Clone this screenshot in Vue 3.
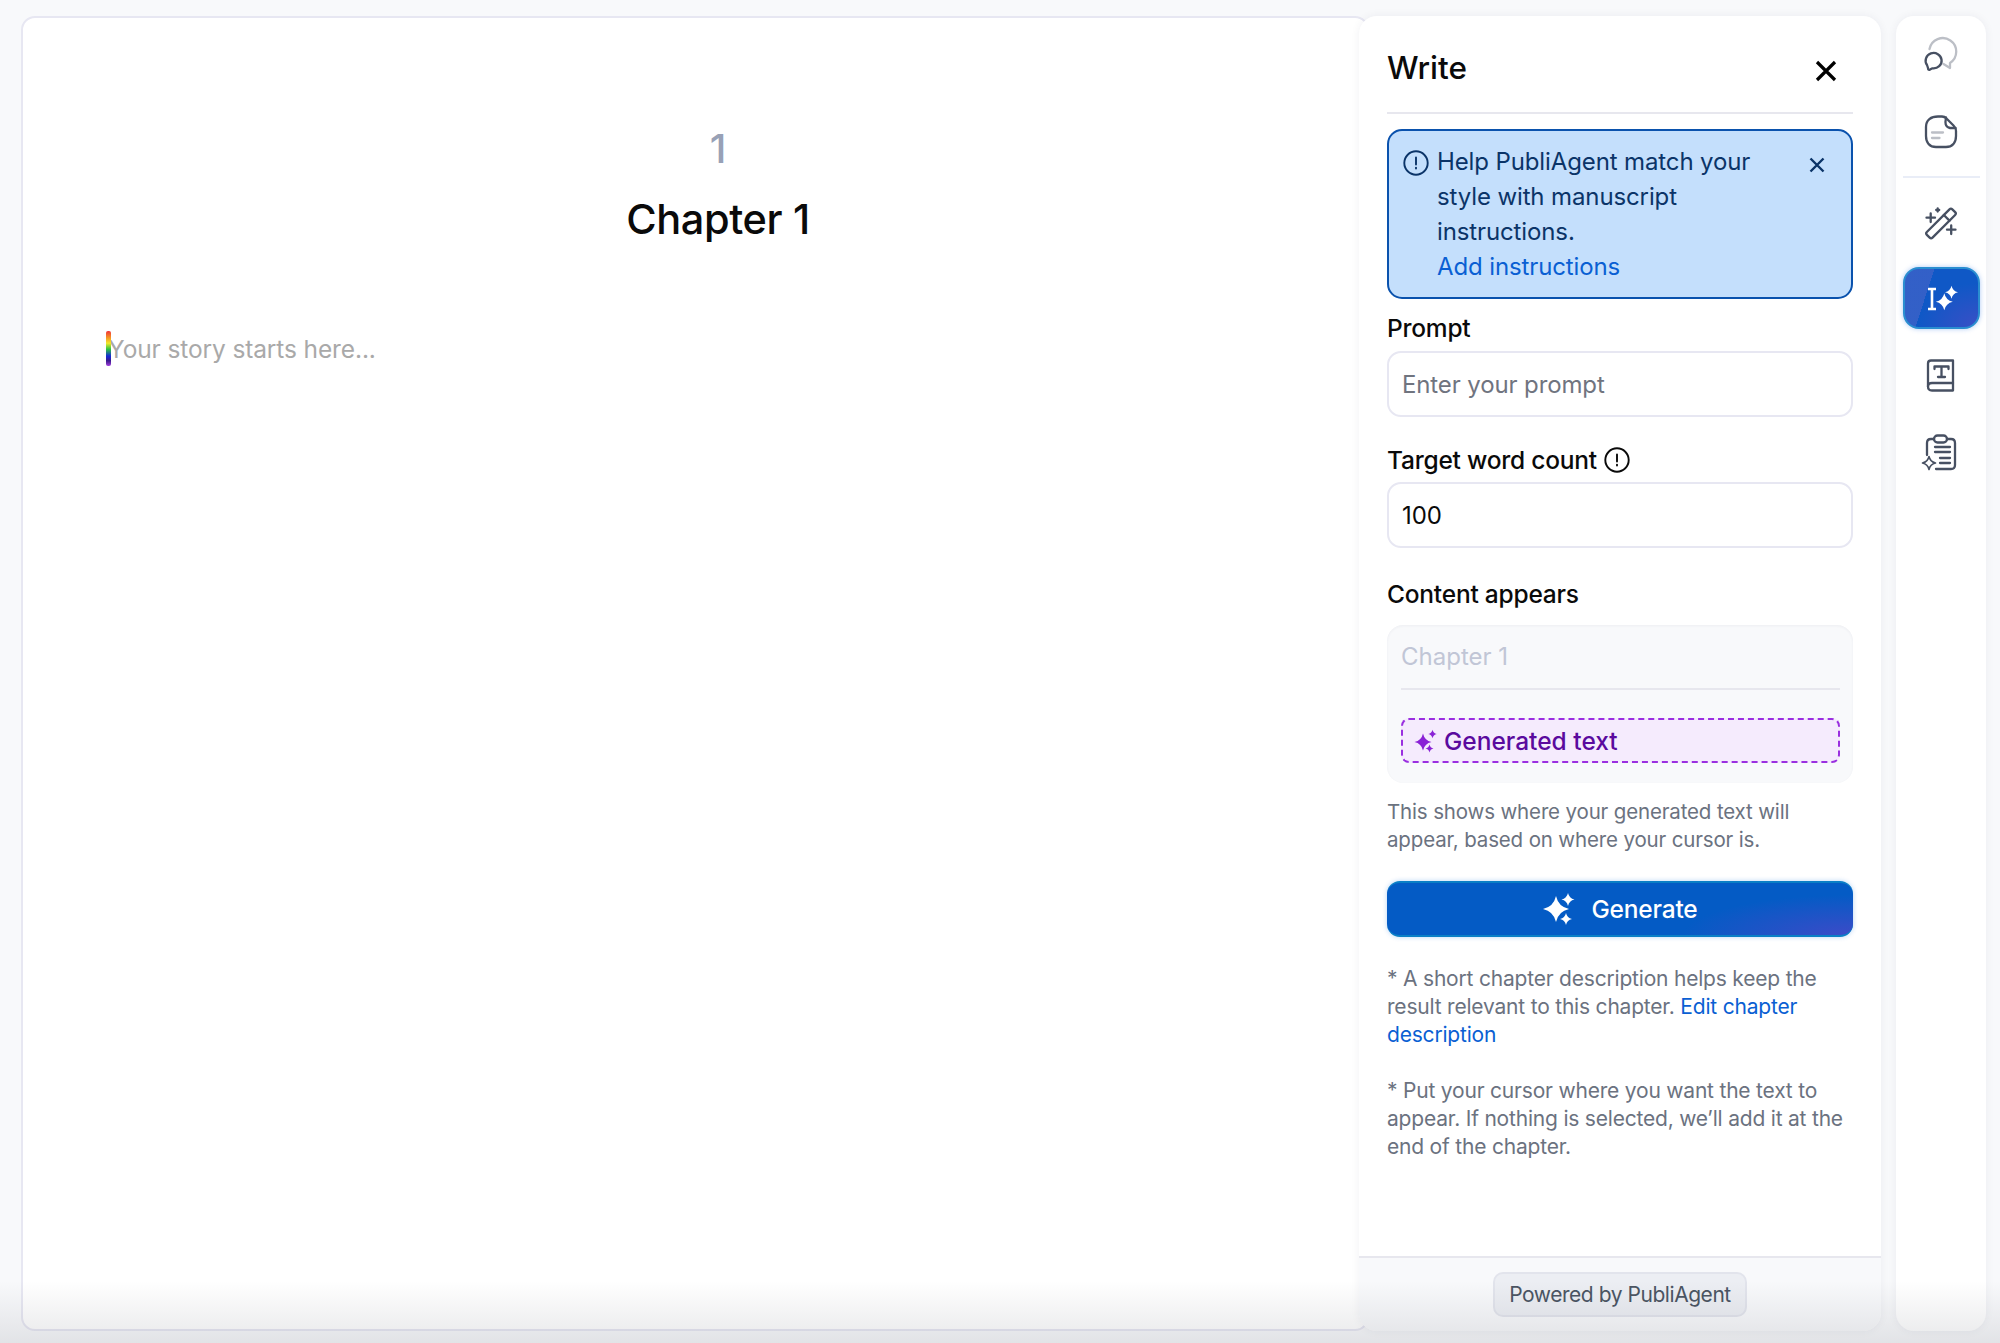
<script setup>
const spark = (cx, cy, r) => {
  const k = r * 0.18
  return `M${cx} ${cy - r}Q${cx + k} ${cy - k} ${cx + r} ${cy}Q${cx + k} ${cy + k} ${cx} ${cy + r}Q${cx - k} ${cy + k} ${cx - r} ${cy}Q${cx - k} ${cy - k} ${cx} ${cy - r}Z`
}
</script>

<template>
  <div class="page">
    <main class="editor">
      <div class="chapter-head">
        <div class="chapter-num">1</div>
        <h1 class="chapter-title">Chapter 1</h1>
      </div>
      <div class="story"><span class="caret"></span><span>Your story starts here...</span></div>
    </main>

    <aside class="panel">
      <div class="panel-body">
        <header class="panel-head">
          <h2>Write</h2>
          <svg class="close" viewBox="0 0 24 24"><path d="M3 3 21 21M21 3 3 21" /></svg>
        </header>

        <section class="alert">
          <svg class="alert-icon" viewBox="0 0 26 26"><circle cx="13" cy="13" r="11.7" /><path d="M13 7.5v7M13 17.6v1" /></svg>
          <p>Help PubliAgent match your style with manuscript instructions.<br /><a>Add instructions</a></p>
          <svg class="alert-close" viewBox="0 0 16 16"><path d="M1.5 1.5 14.5 14.5M14.5 1.5 1.5 14.5" /></svg>
        </section>

        <label class="label first">Prompt</label>
        <input class="field" type="text" placeholder="Enter your prompt" />

        <label class="label second">Target word count
          <svg class="info" viewBox="0 0 26 26"><circle cx="13" cy="13" r="11.7" /><path d="M13 7.5v7M13 17.6v1" /></svg>
        </label>
        <input class="field count" type="text" value="100" />

        <div class="label third">Content appears</div>
        <div class="preview">
          <div class="preview-title">Chapter 1</div>
          <div class="generated">
            <svg viewBox="0 0 24 24"><path :d="spark(9, 13, 8.5)" /><path :d="spark(18.5, 5, 4.2)" /><path :d="spark(15.5, 19.5, 4)" /></svg>
            <span>Generated text</span>
          </div>
        </div>

        <p class="note hint">This shows where your generated text will appear, based on where your cursor is.</p>

        <button class="generate" type="button">
          <svg viewBox="0 0 34 34"><path :d="spark(14, 17, 13)" /><path :d="spark(26, 7.5, 6.5)" /><path :d="spark(24, 27, 6)" /></svg>
          <span>Generate</span>
        </button>

        <p class="note n1">* A short chapter description helps keep the result relevant to this chapter. <a>Edit chapter description</a></p>
        <p class="note n2">* Put your cursor where you want the text to appear. If nothing is selected, we’ll add it at the end of the chapter.</p>
      </div>
      <footer class="panel-foot"><span class="powered">Powered by PubliAgent</span></footer>
    </aside>

    <nav class="rail">
      <div class="rail-item">
        <svg viewBox="0 0 40 40">
          <path class="soft" d="M8.5 15A13.5 13.5 0 1 1 29 29L29 34L22.5 30" />
          <path d="M6 31A8 7.7 0 1 1 11.5 34.3L9 35.6C7.6 36.2 7 35.6 7 34Z" />
        </svg>
      </div>
      <div class="rail-item">
        <svg viewBox="0 0 40 40">
          <path d="M17 5.5H21C23 5.5 24 6 25.5 7.5L32.5 14.5C34 16 35 17.5 35 20V25C35 32 31 36 25 36H15C9 36 5 32 5 25V16C5 9 10 5.5 17 5.5Z" />
          <path d="M25 6.5C24 12 24 16 29 17H34.5" />
          <path class="soft" d="M11 21.5H22M11 27H18.5" />
        </svg>
      </div>
      <div class="rail-sep"></div>
      <div class="rail-item">
        <svg viewBox="0 0 40 40">
          <g transform="rotate(-45 20 20.5)"><rect x="2" y="16.5" width="36" height="8" rx="2" /><path d="M28 16.5v8" /></g>
          <path d="M5.5 14.7H14M9.7 10.5V19M26 26.7H34.5M30.2 22.5V31M16.7 5.5V8.5M15.2 7H18.2" />
        </svg>
      </div>
      <div class="rail-item active">
        <svg viewBox="0 0 40 40">
          <path class="beam" d="M7 11H15M11 11V31M7 31H15" />
          <path class="fill" :d="spark(23.3, 23.7, 8.5)" /><path class="fill" :d="spark(30.5, 14.3, 6.5)" />
        </svg>
      </div>
      <div class="rail-item">
        <svg viewBox="0 0 40 40">
          <path d="M10 5.5H32V35.5H11C8.5 35.5 7 34 7 31.5V8.5C7 6.5 8 5.5 10 5.5Z" />
          <path d="M7 31.5C7 29 8.5 28 11 28H32" />
          <path d="M13.5 14V11.5H27.5V14M20.5 11.5V22M17 22H24" />
        </svg>
      </div>
      <div class="rail-item">
        <svg viewBox="0 0 40 40">
          <path d="M13 7H10C7.5 7 6 8.5 6 11V23M26 7H30C32.5 7 34 8.5 34 11V33C34 35.5 32.5 37 30 37H15" />
          <rect x="13" y="3.5" width="13" height="7" rx="3.5" />
          <path d="M14 15H29M14 20H29M19 26H29M19 31H29" />
          <path class="thin" :d="spark(8, 31, 6.5)" />
        </svg>
      </div>
    </nav>

    <div class="fade"></div>
  </div>
</template>

<style>
html, body { margin: 0; background: #f8f9fb; }
</style>

<style scoped>
* { box-sizing: border-box; }
.page {
  position: relative;
  display: flex;
  align-items: stretch;
  height: 1343px;
  padding: 16px 14px 12px 21px;
  overflow: hidden;
  background: #f8f9fb;
  font-family: Inter, "Liberation Sans", sans-serif;
  color: #0a0a0a;
}
.editor {
  flex: 0 0 1348px;
  min-width: 0;
  background: #fff;
  border: 2px solid #e7e7f2;
  border-radius: 14px;
  padding: 110px 0 0 84px;
}
.chapter-head { text-align: center; width: 1222px; }
.chapter-num { font-size: 40px; line-height: 42px; color: #98a1b6; font-weight: 500; }
.chapter-title { margin: 24px 0 0; font-size: 41.5px; line-height: 50px; font-weight: 500; letter-spacing: -0.4px; }
.story { display: flex; align-items: center; margin-top: 87px; font-size: 24.5px; line-height: 34px; color: #a9a9a9; margin-left: -1px; letter-spacing: -0.12px; }
.story span:last-child { margin-left: -3px; }
.caret {
  width: 5px; height: 35px; border-radius: 2px; position: relative;
  background: linear-gradient(180deg, #f0333a 0%, #f59a23 20%, #f2e82b 35%, #2dc63f 52%, #1426d6 72%, #3b1a8c 85%, #a43ee0 100%);
}
.panel {
  flex: 0 0 522px;
  min-width: 0;
  margin-left: -10px;
  position: relative;
  display: flex;
  flex-direction: column;
  background: #fff;
  border-radius: 18px;
  box-shadow: 0 0 10px rgba(25, 35, 70, 0.06);
}
.panel-body { flex: 1; padding: 0 28px; }
.panel-head { display: flex; justify-content: space-between; align-items: center; height: 98px; border-bottom: 2px solid #e7e7ee; padding-top: 8px; }
.panel-head h2 { margin: 0; font-size: 31.5px; line-height: 40px; font-weight: 500; letter-spacing: 0; }
.close { width: 24px; height: 24px; margin: 6px 15px 0 0; fill: none; stroke: #000; stroke-width: 3.2; }
.alert {
  display: flex;
  margin-top: 15px;
  height: 170px;
  padding: 13px 26px 0 14px;
  background: #c4dffc;
  border: 2px solid #0a52ad;
  border-radius: 15px;
}
.alert-icon { flex: none; width: 26px; height: 26px; margin-top: 6px; fill: none; stroke: #0b3468; stroke-width: 1.9; stroke-linecap: round; }
.alert p { flex: 0 0 342px; margin: 0 0 0 8px; font-size: 24px; line-height: 35px; color: #0b3468; letter-spacing: -0.12px; }
.alert a, .n1 a { color: #0a5fd3; }
.alert-close { flex: none; width: 16px; height: 16px; margin: 13px 0 0 auto; fill: none; stroke: #0b3468; stroke-width: 2.4; }
.label { display: flex; align-items: center; font-size: 24.5px; line-height: 30px; font-weight: 500; letter-spacing: -0.22px; }
.first { margin-top: 14px; }
.second { margin-top: 28px; }
.third { margin-top: 31px; }
.info { width: 26px; height: 26px; margin-left: 7px; fill: none; stroke: #0a0a0a; stroke-width: 1.9; stroke-linecap: round; }
.field {
  display: block;
  width: 100%;
  height: 66px;
  margin-top: 8px;
  padding: 0 13px;
  border: 2px solid #e7e7f2;
  border-radius: 14px;
  background: #fff;
  font: 400 24px Inter, "Liberation Sans", sans-serif;
  letter-spacing: -0.12px;
  color: #0a0a0a;
  outline: none;
}
.field.count { margin-top: 7px; }
.field::placeholder { color: #70747f; opacity: 1; }
.preview {
  margin-top: 16px;
  height: 158px;
  padding: 14px 13px 0 14px;
  background: #f8f9fb;
  border-radius: 16px;
  box-shadow: inset 0 1px 3px rgba(30, 40, 70, 0.05);
}
.preview-title { height: 51px; font-size: 24px; line-height: 36px; color: #c1c6d6; border-bottom: 2px solid #e7e7ee; letter-spacing: 0; }
.generated {
  display: flex;
  align-items: center;
  gap: 6px;
  height: 45px;
  margin-top: 28px;
  padding-left: 11px;
  background: #f5ebfd;
  border: 2px dashed #9a2fe0;
  border-radius: 8px;
  color: #5a0a9e;
  font-size: 24.5px;
  font-weight: 500;
  letter-spacing: 0;
}
.generated svg { width: 24px; height: 24px; fill: #8a22d6; }
.note { margin: 0; font-size: 21px; line-height: 28px; color: #6b7280; letter-spacing: -0.2px; }
.hint { margin-top: 15px; font-size: 20.5px; letter-spacing: -0.15px; }
.generate {
  display: flex;
  align-items: center;
  justify-content: center;
  gap: 15px;
  width: 100%;
  height: 56px;
  margin-top: 27px;
  border: 0;
  border-top: 2px solid #0a7fc6;
  border-bottom: 2px solid #0a7fc6;
  border-radius: 13px;
  background: radial-gradient(ellipse 170px 40px at 100% 100%, #3c4bc8 0%, rgba(60, 75, 200, 0) 100%), #045bc5;
  box-shadow: 0 0 5px rgba(20, 110, 220, 0.3);
  color: #fff;
  font: 500 24.5px Inter, "Liberation Sans", sans-serif;
  letter-spacing: -0.2px;
}
.generate svg { width: 34px; height: 34px; fill: #fff; }
.n1 { margin-top: 28px; }
.n2 { margin-top: 28px; }
.panel-foot {
  flex: 0 0 75px;
  display: flex;
  justify-content: center;
  padding-top: 14px;
  background: #f8f9fb;
  border-top: 2px solid #e7e7ee;
  border-radius: 0 0 18px 18px;
}
.powered {
  display: flex;
  align-items: center;
  justify-content: center;
  width: 254px;
  height: 45px;
  background: #eceef3;
  border: 2px solid #e2e4ec;
  border-radius: 10px;
  font-size: 21px;
  color: #4b5563;
  letter-spacing: -0.45px;
}
.rail {
  flex: 0 0 90px;
  margin-left: 15px;
  display: flex;
  flex-direction: column;
  align-items: center;
  padding-top: 18px;
  background: #fff;
  border-radius: 18px;
  box-shadow: 0 0 10px rgba(25, 35, 70, 0.06);
}
.rail-item {
  display: flex;
  align-items: center;
  justify-content: center;
  width: 77px;
  height: 40px;
  margin-bottom: 37px;
}
.rail-item svg { width: 40px; height: 40px; fill: none; stroke: #475062; stroke-width: 2.3; stroke-linecap: round; stroke-linejoin: round; }
.rail-item .soft { stroke: #bcbfc6; }
.rail-item .thin { stroke-width: 1.6; fill: #fff; }
.rail-sep { width: 77px; height: 2px; background: #e9edf7; margin: -12px 0 25px; }
.rail-item.active {
  height: 62px;
  margin: -13px 0 26px;
  border: 2px solid #2a8ed0;
  border-radius: 16px;
  background:
    linear-gradient(108deg, rgba(70, 100, 200, 0.65) 0 32%, rgba(70, 100, 200, 0) 32%),
    radial-gradient(ellipse 60px 44px at 100% 100%, #3a4fc6 0%, rgba(58, 79, 198, 0) 100%),
    #0f58c6;
  box-shadow: 0 0 5px rgba(50, 120, 230, 0.4);
}
.rail-item.active .beam { stroke: #fff; stroke-width: 2.6; stroke-linecap: butt; }
.rail-item.active .fill { fill: #fff; stroke: none; }
.fade {
  position: absolute;
  left: 0;
  right: 0;
  bottom: 0;
  height: 62px;
  pointer-events: none;
  background: linear-gradient(180deg, rgba(30, 35, 50, 0) 0%, rgba(30, 35, 50, 0.1) 100%);
}
</style>
